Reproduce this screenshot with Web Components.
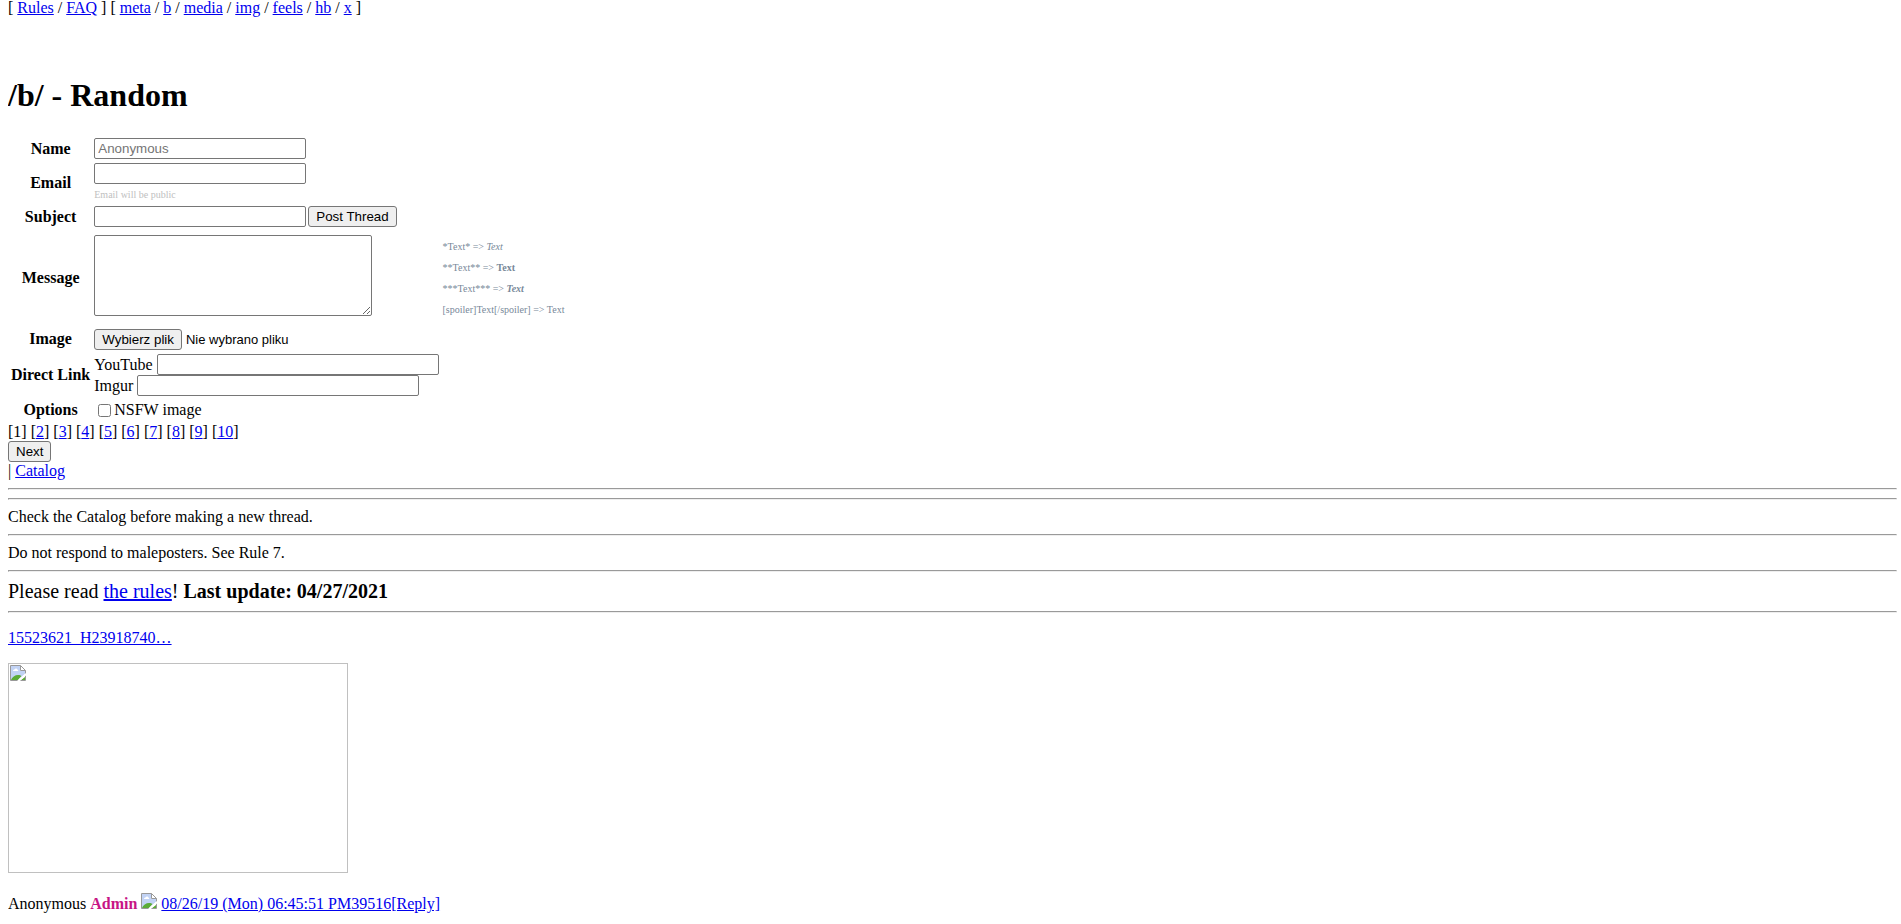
<!DOCTYPE html>
<html lang="en">
<head>
<meta charset="utf-8">
<title>/b/ - Random</title>
<style>
  body {
    margin: 0 4px 0 8px;
    background: #fff;
    color: #000;
    font: 16px/18px "Liberation Serif", "Times New Roman", serif;
  }
  a { color: #0000ee; }
  h1 { margin: 61px 0 21px; font-size: 32px; line-height: 37px; }
</style>
</head>
<body>
<board-nav></board-nav>
<h1>/b/ - Random</h1>
<post-form></post-form>
<page-list pages="10"></page-list>
<board-notice></board-notice>
<board-notice>Check the Catalog before making a new thread.</board-notice>
<board-notice>Do not respond to maleposters. See Rule 7.</board-notice>
<board-notice large>Please read <a href="#rules">the rules</a>! <b>Last update: 04/27/2021</b></board-notice>
<thread-post filename="15523621_H23918740…">
  <span slot="author">Anonymous</span>
  <b slot="role">Admin</b>
  <a slot="meta" href="#39516">08/26/19 (Mon) 06:45:51 PM39516[Reply]</a>
</thread-post>

<template id="nav">
  <style>
    :host { display: block; line-height: 16px; }
    a { color: #0000ee; }
  </style>
  <nav>[ <a href="#rules">Rules</a> / <a href="#faq">FAQ</a> ] [ <a href="#meta">meta</a> / <a href="#b">b</a> / <a href="#media">media</a> / <a href="#img">img</a> / <a href="#feels">feels</a> / <a href="#hb">hb</a> / <a href="#x">x</a> ]</nav>
</template>

<template id="form">
  <style>
    :host { display: block; }
    form { margin: 0; }
    table { border-spacing: 2px; }
    th, td { padding: 1px; vertical-align: middle; }
    td { text-align: left; }
    th { text-align: center; }
    input, button, textarea { font-family: "Liberation Sans", Arial, sans-serif; }
    input[type=text], input[type=email] {
      box-sizing: border-box; width: 212px; height: 21px; margin: 0; padding: 1px 3px;
      border: 1px solid #767676; border-radius: 2px; background: #fff; vertical-align: top;
    }
    input::placeholder { color: #757575; }
    button {
      box-sizing: border-box; height: 21px; padding: 1px 7px; margin: 0;
      border: 1px solid #767676; border-radius: 3px; background: #efefef; color: #000;
      vertical-align: top;
    }
    textarea {
      display: block; box-sizing: border-box; width: 278px; height: 81px; margin: 0 0 5px;
      border: 1px solid #767676; border-radius: 2px;
    }
    .send { display: flex; gap: 2px; }
    .email td { line-height: 18px; }
    .note { display: block; height: 18px; font-size: 10px; line-height: 22px; color: #c0c0c0; }
    .message td { height: 93px; }
    .help { margin: 0; padding: 0; list-style: none; font-size: 10px; line-height: 21px; color: #778899; }
    .file { display: flex; align-items: center; gap: 4px; height: 22px; font: 13px "Liberation Sans", Arial, sans-serif; }
    .link { display: flex; gap: 4px; line-height: 21px; }
    .link input[type=text] { width: 282px; }
    .option { display: flex; align-items: center; line-height: 20px; }
    .option input { margin: 0 3px 0 4px; }
  </style>
  <form>
    <table>
      <tr><th><label for="name">Name</label></th><td><input type="text" id="name" placeholder="Anonymous"></td></tr>
      <tr class="email"><th><label for="email">Email</label></th><td><input type="email" id="email"><small class="note">Email will be public</small></td></tr>
      <tr><th><label for="subject">Subject</label></th><td><div class="send"><input type="text" id="subject"><button type="submit">Post Thread</button></div></td></tr>
      <tr class="message"><th><label for="message">Message</label></th><td><textarea id="message"></textarea></td>
        <td><ul class="help">
          <li>*Text* =&gt; <i>Text</i></li>
          <li>**Text** =&gt; <b>Text</b></li>
          <li>***Text*** =&gt; <b><i>Text</i></b></li>
          <li>[spoiler]Text[/spoiler] =&gt; Text</li>
        </ul></td></tr>
      <tr><th><label for="pick">Image</label></th><td><div class="file"><button type="button" id="pick">Wybierz plik</button><span id="chosen">Nie wybrano pliku</span><input type="file" id="file" hidden></div></td></tr>
      <tr><th>Direct Link</th><td>
        <div class="link"><label for="youtube">YouTube</label><input type="text" id="youtube"></div>
        <div class="link"><label for="imgur">Imgur</label><input type="text" id="imgur"></div>
      </td></tr>
      <tr><th>Options</th><td><div class="option"><input type="checkbox" id="nsfw"><label for="nsfw">NSFW image</label></div></td></tr>
    </table>
  </form>
</template>

<template id="pages">
  <style>
    :host { display: block; }
    a { color: #0000ee; }
    button {
      display: block; box-sizing: border-box; height: 21px; margin: 0; padding: 1px 7px;
      border: 1px solid #767676; border-radius: 3px; background: #efefef; color: #000;
      font-family: "Liberation Sans", Arial, sans-serif;
    }
  </style>
  <nav id="list"></nav>
  <button type="button">Next</button>
  <div>| <a href="#catalog">Catalog</a></div>
</template>

<template id="notice">
  <style>
    :host { display: block; }
    :host([large]) { font-size: 20px; line-height: 23px; }
    hr { margin: 8px 0; height: 0; border: 1px solid; border-color: #9a9a9a #eee #eee #9a9a9a; }
    .end { display: none; }
    :host([large]) .end { display: block; }
  </style>
  <hr><slot></slot><hr class="end">
</template>

<template id="post">
  <style>
    :host { display: block; margin-top: 16px; }
    a { color: #0000ee; }
    figure {
      box-sizing: border-box; width: 340px; max-width: 100%; height: 210px;
      margin: 16px 0 20px; padding: 1px; border: 1px solid #c0c0c0;
    }
    svg { flex: none; display: block; width: 16px; height: 16px; }
    .info { display: flex; align-items: flex-end; gap: 4px; }
    .info svg { margin-bottom: 4px; }
    ::slotted(b) { color: #c71585; }
  </style>
  <a id="name" href="#file"></a>
  <figure></figure>
  <div class="info"><slot name="author"></slot><slot name="role"></slot><span id="flag"></span><slot name="meta"></slot></div>
</template>

<template id="missing">
  <svg viewBox="0 0 16 16" aria-hidden="true">
    <path d="M1 1h9v5h5v3L8 15H1z" fill="#c2d3f5"/>
    <path d="M3 6c0-1 .8-1.500 1.500-1.500C5 3 7 3 7.300 4.500 8.300 4.500 8.500 6 8 6z" fill="#fff"/>
    <path d="M1 15c1-3 4-5 7-5 1.500 0 3 .5 3.500 1L8 15z" fill="#5bac37"/>
    <path d="M11 15l4-3v3z" fill="#5bac37"/>
    <path d="M10.500.5v5h5" fill="#fff" stroke="#999"/>
    <path d="M.5 15.500V.5h10l5 5v10z" fill="none" stroke="#999"/>
    <path d="M7 16l3-3 6-5v2.500L12 14l-2 2z" fill="#fff"/>
  </svg>
</template>

<script>
  const stamp = id => document.getElementById(id).content.cloneNode(true);

  class BoardElement extends HTMLElement {
    constructor() {
      super();
      this.attachShadow({ mode: "open" }).append(stamp(this.constructor.template));
    }
  }

  class BoardNav extends BoardElement { static template = "nav"; }

  class PostForm extends BoardElement {
    static template = "form";
    connectedCallback() {
      const root = this.shadowRoot;
      const file = root.getElementById("file");
      root.querySelector("form").addEventListener("submit", e => e.preventDefault());
      root.getElementById("pick").addEventListener("click", () => file.click());
      file.addEventListener("change", () => {
        if (file.files.length) root.getElementById("chosen").textContent = file.files[0].name;
      });
    }
  }

  class PageList extends BoardElement {
    static template = "pages";
    connectedCallback() {
      const items = ["[1]"];
      for (let n = 2; n <= Number(this.getAttribute("pages")); n++) items.push(`[<a href="#page${n}">${n}</a>]`);
      this.shadowRoot.getElementById("list").innerHTML = items.join(" ");
    }
  }

  class BoardNotice extends BoardElement { static template = "notice"; }

  class ThreadPost extends BoardElement {
    static template = "post";
    connectedCallback() {
      const root = this.shadowRoot;
      root.getElementById("name").textContent = this.getAttribute("filename");
      root.querySelector("figure").append(stamp("missing"));
      root.getElementById("flag").append(stamp("missing"));
    }
  }

  customElements.define("board-nav", BoardNav);
  customElements.define("post-form", PostForm);
  customElements.define("page-list", PageList);
  customElements.define("board-notice", BoardNotice);
  customElements.define("thread-post", ThreadPost);
</script>
</body>
</html>
